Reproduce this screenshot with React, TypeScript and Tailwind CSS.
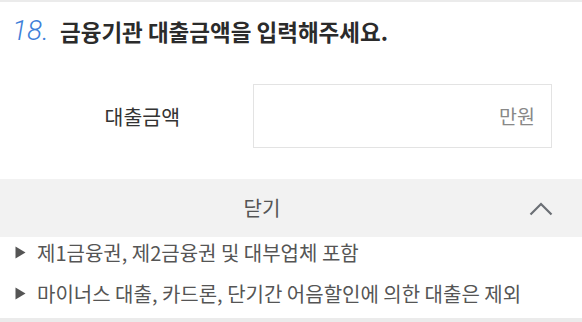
const kr = { fontFamily: '"Noto Sans CJK KR", "Noto Sans", sans-serif' };

function ChevronUp() {
  return (
    <svg width="24" height="14" viewBox="0 0 24 14" fill="none">
      <path d="M1.5 12.5 L12 2 L22.5 12.5" stroke="#6b6f75" strokeWidth="2.2" />
    </svg>
  );
}

function Arrow() {
  return (
    <svg width="11" height="13" viewBox="0 0 11 13" className="mr-[11px] shrink-0">
      <path d="M0.5 0.5 L10.5 6.5 L0.5 12.5 Z" fill="#555" />
    </svg>
  );
}

const notes = [
  "제1금융권, 제2금융권 및 대부업체 포함",
  "마이너스 대출, 카드론, 단기간 어음할인에 의한 대출은 제외",
];

export default function App() {
  return (
    <div className="w-[582px] h-[322px] bg-white overflow-hidden flex flex-col" style={kr}>
      <div className="h-[2px] bg-[#ebebeb]" />

      <div className="h-[58px] flex items-center pl-[12px]">
        <span
          className="text-[28px] font-light italic text-[#3f7fd9] leading-none w-[48px]"
          style={{ fontFamily: "Roboto, sans-serif" }}
        >
          18.
        </span>
        <span className="text-[22.5px] font-bold text-[#2b2b2b] leading-none">
          금융기관 대출금액을 입력해주세요.
        </span>
      </div>

      <div className="flex items-center pt-[24px]">
        <div className="w-[253px] pr-[73px] text-right text-[20.5px] text-[#333] leading-none">
          대출금액
        </div>
        <div className="w-[299px] h-[64px] border border-[#e3e3e3] flex items-center justify-end pr-[16px] text-[19.5px] text-[#888] leading-none">
          만원
        </div>
      </div>

      <div className="mt-[31px] h-[58px] bg-[#f2f2f2] relative flex items-center justify-center pr-[58px]">
        <span className="text-[20px] text-[#555] leading-none">닫기</span>
        <div className="absolute right-[29px] top-[23px]">
          <ChevronUp />
        </div>
      </div>

      <div className="flex-1 flex flex-col pl-[15px] pt-[3px] gap-[16px]">
        {notes.map((n) => (
          <div key={n} className="flex items-center h-[25px] text-[20px] text-[#555] leading-none">
            <Arrow />
            <span>{n}</span>
          </div>
        ))}
      </div>

      <div className="h-[4px] bg-[#ebebeb]" />
    </div>
  );
}
